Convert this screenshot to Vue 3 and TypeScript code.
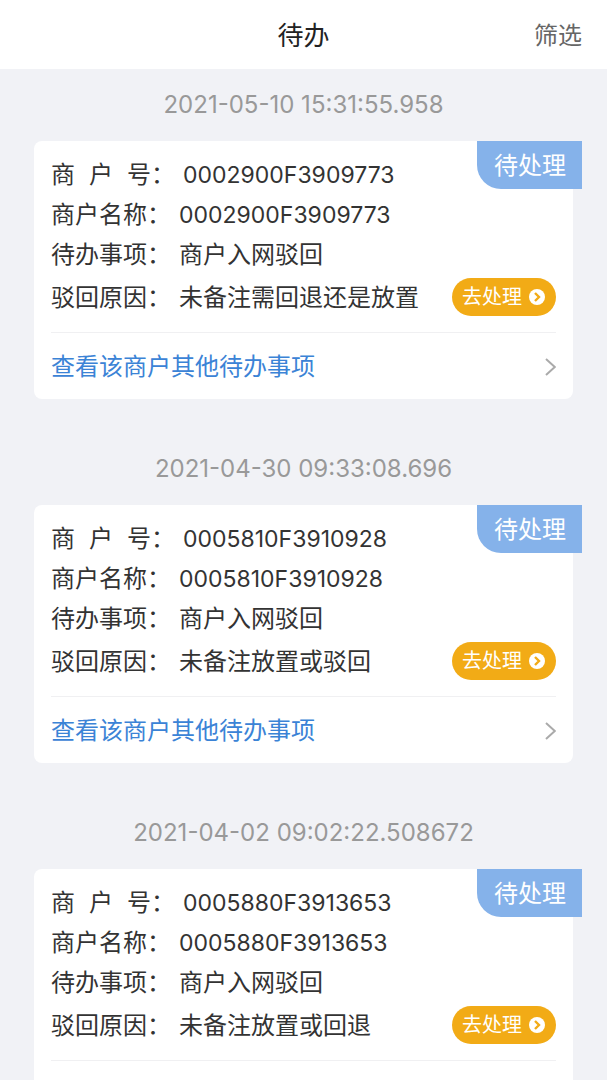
<script setup lang="ts">
interface Todo {
  time: string
  merchantNo: string
  merchantName: string
  item: string
  reason: string
}

const todos: Todo[] = [
  {
    time: '2021-05-10 15:31:55.958',
    merchantNo: '0002900F3909773',
    merchantName: '0002900F3909773',
    item: '商户入网驳回',
    reason: '未备注需回退还是放置',
  },
  {
    time: '2021-04-30 09:33:08.696',
    merchantNo: '0005810F3910928',
    merchantName: '0005810F3910928',
    item: '商户入网驳回',
    reason: '未备注放置或驳回',
  },
  {
    time: '2021-04-02 09:02:22.508672',
    merchantNo: '0005880F3913653',
    merchantName: '0005880F3913653',
    item: '商户入网驳回',
    reason: '未备注放置或回退',
  },
]
</script>

<template>
  <div class="page">
    <header class="bar">
      <h1 class="title">待办</h1>
      <button type="button" class="filter">筛选</button>
    </header>
    <main class="list">
      <section v-for="todo in todos" :key="todo.time" class="entry">
        <time class="time">{{ todo.time }}</time>
        <article class="card">
          <span class="badge">待处理</span>
          <dl class="fields">
            <div class="row">
              <dt class="label spread"><span>商</span><span>户</span><span>号：</span></dt>
              <dd class="value number">{{ todo.merchantNo }}</dd>
            </div>
            <div class="row">
              <dt class="label">商户名称：</dt>
              <dd class="value number">{{ todo.merchantName }}</dd>
            </div>
            <div class="row">
              <dt class="label">待办事项：</dt>
              <dd class="value">{{ todo.item }}</dd>
            </div>
            <div class="row last">
              <dt class="label">驳回原因：</dt>
              <dd class="value">{{ todo.reason }}</dd>
              <dd class="action">
                <button type="button" class="handle">
                  去处理
                  <svg class="go" viewBox="0 0 16 16" aria-hidden="true">
                    <circle cx="8" cy="8" r="8" fill="#fff" />
                    <path d="M6 4 10 8l-4 4" fill="none" stroke="#f2ab16" stroke-width="2.4" />
                  </svg>
                </button>
              </dd>
            </div>
          </dl>
          <a href="#" class="more">
            查看该商户其他待办事项
            <svg class="chevron" viewBox="0 0 12 20" aria-hidden="true">
              <path d="M2 2 10.8 10 2 18" fill="none" stroke="#aaa" stroke-width="2" />
            </svg>
          </a>
        </article>
      </section>
    </main>
  </div>
</template>

<style>
html,
body {
  background: #f1f2f6;
}

body {
  margin: 0;
}
</style>

<style scoped>
.page {
  font-family: Inter, 'Noto Sans CJK SC', sans-serif;
  font-size: 24px;
  line-height: 40px;
  color: #333;
  background: #f1f2f6;
}

button {
  border: 0;
  padding: 0;
  background: none;
  font: inherit;
  cursor: pointer;
}

.bar {
  display: grid;
  grid-template-columns: 1fr auto 1fr;
  align-items: center;
  box-sizing: border-box;
  height: 69px;
  padding: 2px 25px 0;
  background: #fff;
}

.title {
  grid-column: 2;
  margin: 0;
  font-size: 26px;
  font-weight: 400;
  color: #222;
}

.filter {
  justify-self: end;
  color: #666;
}

.list {
  padding: 0 34px;
}

.entry {
  margin-bottom: 34px;
}

.time {
  display: block;
  line-height: 72px;
  text-align: center;
  color: #999;
}

.card {
  position: relative;
  padding: 14px 17px 0;
  border-radius: 8px;
  background: #fff;
}

.badge {
  position: absolute;
  top: 0;
  right: -9px;
  padding: 2px 16px 0 17px;
  line-height: 46px;
  border-bottom-left-radius: 24px;
  background: #85b2ea;
  color: #fff;
}

.fields {
  margin: 0;
  padding-bottom: 11px;
  border-bottom: 1px solid #f0f0f2;
}

.row {
  display: flex;
  align-items: center;
  height: 40px;
}

.last {
  height: 46px;
}

.label {
  flex: none;
}

.spread {
  display: flex;
  gap: 14px;
}

.value {
  margin: 0 0 0 8px;
  white-space: nowrap;
}

.number {
  font-size: 23px;
}

.action {
  display: flex;
  margin: 0 0 2px auto;
}

.handle {
  display: flex;
  align-items: center;
  gap: 7px;
  height: 38px;
  padding: 0 11px 0 10px;
  border-radius: 19px;
  background: #f2ab16;
  color: #fff;
  font-size: 20px;
}

.go {
  width: 16px;
  height: 16px;
}

.more {
  display: flex;
  align-items: center;
  justify-content: space-between;
  box-sizing: border-box;
  height: 66px;
  padding-top: 2px;
  line-height: 24px;
  color: #3b83d6;
  text-decoration: none;
}

.chevron {
  width: 12px;
  height: 20px;
}
</style>
